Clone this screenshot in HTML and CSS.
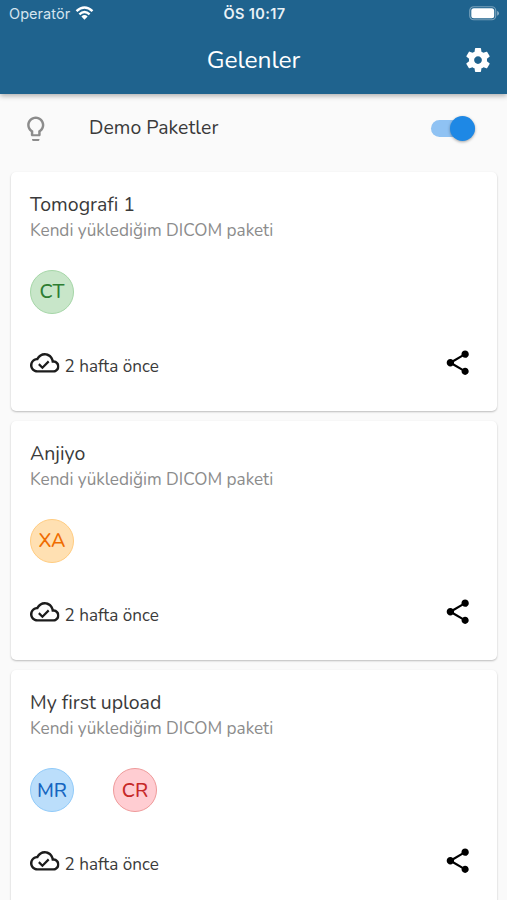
FILE: index.html
```html
<!DOCTYPE html>
<html lang="tr">
<head>
<meta charset="utf-8">
<title>Gelenler</title>
<link rel="stylesheet" href="styles.css">
</head>
<body>
<svg class="defs" width="0" height="0">
  <symbol id="cloud" viewBox="0 0 24 24"><path d="M19.35 10.04C18.67 6.59 15.64 4 12 4 9.11 4 6.6 5.64 5.35 8.04 2.34 8.36 0 10.91 0 14c0 3.31 2.69 6 6 6h13c2.76 0 5-2.24 5-5 0-2.64-2.05-4.78-4.65-4.96zM19 18H6c-2.21 0-4-1.79-4-4 0-2.05 1.53-3.76 3.56-3.97l1.07-.11.5-.95C8.08 7.14 9.94 6 12 6c2.62 0 4.88 1.86 5.39 4.43l.3 1.5 1.53.11c1.56.1 2.78 1.41 2.78 2.96 0 1.65-1.35 3-3 3z"/><path d="m7.2 13.1 2.9 2.9 5.1-5.1" fill="none" stroke="currentColor" stroke-width="1.8"/></symbol>
  <symbol id="share" viewBox="0 0 24 24"><path d="M18 16.08c-.76 0-1.44.3-1.96.77L8.91 12.7c.05-.23.09-.46.09-.7s-.04-.47-.09-.7l7.05-4.11c.54.5 1.25.81 2.04.81 1.66 0 3-1.34 3-3s-1.34-3-3-3-3 1.34-3 3c0 .24.04.47.09.7L8.04 9.81C7.5 9.31 6.79 9 6 9c-1.66 0-3 1.34-3 3s1.34 3 3 3c.79 0 1.5-.31 2.04-.81l7.12 4.16c-.05.21-.08.43-.08.65 0 1.61 1.31 2.92 2.92 2.92s2.92-1.31 2.92-2.92-1.31-2.92-2.92-2.92z"/></symbol>
</svg>
<header class="appbar">
  <div class="status">
    <div class="carrier"><span class="carrier-name">Operatör</span>
      <svg class="wifi" viewBox="0 0 18 14"><g fill="none" stroke="currentColor" stroke-width="2.4"><path d="M1 5.2Q9-2.2 17 5.2"/><path d="M3.9 8.3Q9 3.6 14.1 8.3"/></g><path d="M5.9 10.4Q9 7.8 12.1 10.4L9 13.7z"/></svg>
    </div>
    <span class="clock">ÖS 10:17</span>
    <svg class="battery" viewBox="0 0 31 15"><rect x=".75" y=".75" width="26" height="13" rx="4" fill="none" stroke="#fff" stroke-opacity=".4" stroke-width="1.2"/><rect x="2.3" y="2.3" width="22.9" height="9.9" rx="2.5"/><path d="M28.2 4.8v5q1.8-1 1.8-2.5t-1.8-2.5z" opacity=".5"/></svg>
  </div>
  <div class="toolbar">
    <h1 class="page-title">Gelenler</h1>
    <svg class="gear" viewBox="0 0 24 24"><path d="M19.14 12.94c.04-.3.06-.61.06-.94 0-.32-.02-.64-.07-.94l2.03-1.58c.18-.14.23-.41.12-.61l-1.92-3.32c-.12-.22-.37-.29-.59-.22l-2.39.96c-.5-.38-1.03-.7-1.62-.94l-.36-2.54c-.04-.24-.24-.41-.48-.41h-3.84c-.24 0-.43.17-.47.41l-.36 2.54c-.59.24-1.13.57-1.62.94l-2.39-.96c-.22-.08-.47 0-.59.22L2.74 8.87c-.12.21-.08.47.12.61l2.03 1.58c-.05.3-.09.63-.09.94s.02.64.07.94l-2.03 1.58c-.18.14-.23.41-.12.61l1.92 3.32c.12.22.37.29.59.22l2.39-.96c.5.38 1.03.7 1.62.94l.36 2.54c.05.24.24.41.48.41h3.84c.24 0 .44-.17.47-.41l.36-2.54c.59-.24 1.13-.56 1.62-.94l2.39.96c.22.08.47 0 .59-.22l1.92-3.32c.12-.22.07-.47-.12-.61l-2.01-1.58zM12 15.1c-1.71 0-3.1-1.39-3.1-3.1s1.39-3.1 3.1-3.1 3.1 1.39 3.1 3.1-1.39 3.1-3.1 3.1z"/></svg>
  </div>
</header>
<main>
  <div class="demo-row">
    <svg class="bulb" viewBox="0 0 24 24"><path d="M9 21c0 .55.45 1 1 1h4c.55 0 1-.45 1-1v-.6H9v.6zm3-19C8.14 2 5 5.14 5 9c0 2.38 1.19 4.47 3 5.74V17c0 .55.45 1 1 1h6c.55 0 1-.45 1-1v-2.26c1.81-1.27 3-3.36 3-5.74 0-3.86-3.14-7-7-7zm2.85 11.1l-.85.6V16.4h-4v-2.7l-.85-.6C7.8 12.16 7 10.63 7 9c0-2.76 2.24-5 5-5s5 2.24 5 5c0 1.63-.8 3.16-2.15 4.1z"/></svg>
    <span class="demo-label">Demo Paketler</span>
    <div class="switch"><div class="thumb"></div></div>
  </div>
  <div class="list">
    <article class="card">
      <h2 class="name">Tomografi 1</h2>
      <p class="desc">Kendi yüklediğim DICOM paketi</p>
      <div class="tags"><span class="tag ct">CT</span></div>
      <div class="foot"><svg class="cloud"><use href="#cloud"/></svg><span class="ago">2 hafta önce</span><svg class="share"><use href="#share"/></svg></div>
    </article>
    <article class="card">
      <h2 class="name">Anjiyo</h2>
      <p class="desc">Kendi yüklediğim DICOM paketi</p>
      <div class="tags"><span class="tag xa">XA</span></div>
      <div class="foot"><svg class="cloud"><use href="#cloud"/></svg><span class="ago">2 hafta önce</span><svg class="share"><use href="#share"/></svg></div>
    </article>
    <article class="card">
      <h2 class="name">My first upload</h2>
      <p class="desc">Kendi yüklediğim DICOM paketi</p>
      <div class="tags"><span class="tag mr">MR</span><span class="tag cr">CR</span></div>
      <div class="foot"><svg class="cloud"><use href="#cloud"/></svg><span class="ago">2 hafta önce</span><svg class="share"><use href="#share"/></svg></div>
    </article>
  </div>
</main>
</body>
</html>
```
FILE: styles.css
```css
* { box-sizing: border-box; }
html, body { height: 100%; }
body {
  margin: 0;
  background: #fafafa;
  color: #3a3a3a;
  font-family: Nunito, Lato, sans-serif;
  overflow: hidden;
  display: flex;
  flex-direction: column;
}
svg { display: block; fill: currentColor; flex: none; }
.defs { position: absolute; }
.appbar {
  flex: none;
  height: 94px;
  background: #1f638e;
  color: #fff;
  box-shadow: 0 2px 5px rgba(0, 0, 0, .3);
  z-index: 1;
}
.status {
  height: 27px;
  display: grid;
  grid-template-columns: 1fr auto 1fr;
  align-items: center;
  padding: 0 7px 0 9px;
  font-family: Inter, sans-serif;
  font-size: 14.5px;
}
.carrier { display: flex; align-items: center; gap: 5px; color: #fff; }
.carrier-name { color: #d5e5ef; letter-spacing: .05px; }
.wifi { width: 19px; height: 14px; margin-top: -1px; }
.clock { font-weight: 600; font-size: 14.5px; letter-spacing: .4px; color: #e8f1f6; }
.battery { width: 31px; height: 15px; justify-self: end; }
.toolbar {
  height: 65px;
  display: grid;
  grid-template-columns: 1fr auto 1fr;
  align-items: center;
  padding: 0 14.5px;
}
.page-title { grid-column: 2; margin: 0; font-size: 24.6px; font-weight: 400; line-height: 34px; letter-spacing: -.1px; }
.gear { width: 30px; height: 30px; justify-self: end; }
.demo-row { height: 77.5px; padding: 0 32.5px 9px 20.5px; display: flex; align-items: center; }
.bulb { width: 29.5px; height: 29.5px; color: #8c8c8c; }
.demo-label { margin: -1px 0 0 39px; font-size: 19.4px; letter-spacing: .05px; }
.switch {
  margin-left: auto;
  width: 43.5px;
  height: 17px;
  border-radius: 9px;
  background: #8fc2f3;
  display: flex;
  align-items: center;
  justify-content: flex-end;
}
.thumb { flex: none; width: 25px; height: 25px; border-radius: 50%; background: #1e88e5; box-shadow: 0 1px 3px rgba(0, 0, 0, .35); }
.list { padding: 0 10px 0 11px; display: flex; flex-direction: column; gap: 9.8px; }
.card {
  height: 239.5px;
  background: #fff;
  border-radius: 5px;
  box-shadow: 0 1px 2px rgba(0, 0, 0, .25);
  padding: 19px 24.5px 0 19px;
}
.name { margin: 0; font-size: 19.5px; line-height: 28px; font-weight: 400; }
.desc { margin: 0; font-size: 17.2px; line-height: 24px; color: #8c8c8c; white-space: nowrap; letter-spacing: -.03px; }
.tags { margin-top: 27px; display: flex; gap: 39px; }
.tag {
  width: 44px;
  height: 44px;
  border-radius: 50%;
  border: 1px solid;
  display: flex;
  align-items: center;
  justify-content: center;
  font-size: 19.7px;
  font-weight: 500;
}
.ct { background: #c8e6c9; border-color: #a5d6a7; color: #2e7d32; }
.xa { background: #ffe0b2; border-color: #ffcc80; color: #ef6c00; }
.mr { background: #bbdefb; border-color: #90caf9; color: #1565c0; }
.cr { background: #ffcdd2; border-color: #ef9a9a; color: #c62828; }
.foot { height: 30px; margin-top: 34px; display: flex; align-items: center; }
.cloud { width: 29.5px; height: 29.5px; color: #1c1c1c; }
.ago { margin: 7px 0 0 5px; font-size: 17.1px; line-height: 23px; }
.share { width: 29.5px; height: 29.5px; margin-left: auto; color: #000; }
```
